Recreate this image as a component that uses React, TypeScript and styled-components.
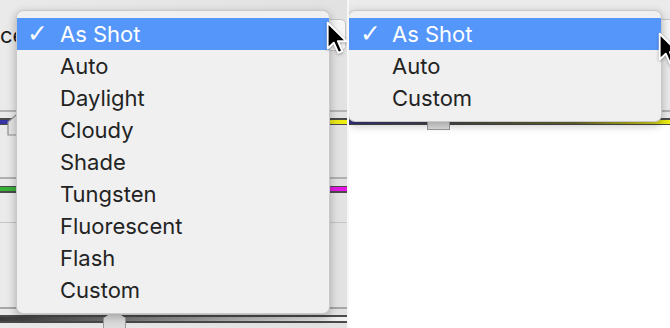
import React from "react";
import styled, { createGlobalStyle } from "styled-components";

const GlobalStyle = createGlobalStyle`
  html, body { margin: 0; padding: 0; overflow: hidden; background: #ffffff; }
  * { box-sizing: border-box; }
`;

const Screen = styled.div`
  display: grid;
  grid-template-columns: 347px 323px;
  width: 670px;
  height: 328px;
  font-family: Inter, "Liberation Sans", sans-serif;
`;

const Panel = styled.div<{ $bg: string }>`
  position: relative;
  overflow: hidden;
  background: ${(p) => p.$bg};
  display: flex;
  flex-direction: column;
`;

const RightPanel = styled(Panel)`
  border-left: 2px solid #f7f7f7;
`;

const LabelRow = styled.div`
  height: 110px;
  padding-top: 19px;
`;

const Label = styled.div`
  width: 16px;
  height: 32px;
  white-space: nowrap;
  font-size: 22px;
  line-height: 32px;
  color: #1c1c1c;
`;

const Gap = styled.div<{ $h: number }>`
  height: ${(p) => p.$h}px;
  flex: none;
`;

const Rule = styled.div<{ $h: number; $c: string }>`
  height: ${(p) => p.$h}px;
  background: ${(p) => p.$c};
  flex: none;
`;

const Track = styled.div<{ $fill: string; $top: number; $bottom: number; $h: number }>`
  position: relative;
  flex: none;
  height: ${(p) => p.$h}px;
  border-top: ${(p) => p.$top}px solid #4a4a4a;
  border-bottom: ${(p) => p.$bottom}px solid #4a4a4a;
  background: ${(p) => p.$fill};
`;

const WhiteArea = styled.div`
  flex: 1;
  background: #ffffff;
`;

const Thumb = styled.div<{ $left: number; $top: number }>`
  position: absolute;
  left: ${(p) => p.$left}px;
  top: ${(p) => p.$top}px;
  width: 23px;
  height: 18px;
  background: #dcdcdc;
  border: 1px solid #9a9a9a;
  clip-path: polygon(0 40%, 50% 0, 100% 40%, 100% 100%, 0 100%);
`;

const ThumbOutline = styled.svg<{ $left: number; $top: number }>`
  position: absolute;
  left: ${(p) => p.$left}px;
  top: ${(p) => p.$top}px;
`;

const ButtonStub = styled.div<{ $left: number; $top: number }>`
  position: absolute;
  left: ${(p) => p.$left}px;
  top: ${(p) => p.$top}px;
  width: 30px;
  height: 32px;
  background: #f6f6f6;
  border: 1px solid #c4c4c4;
  border-radius: 5px;
`;

const Menu = styled.div<{ $left: number }>`
  position: absolute;
  left: ${(p) => p.$left}px;
  top: 10px;
  width: 314px;
  padding: 7px 0;
  background: #f0f0f0;
  border: 1px solid rgba(0, 0, 0, 0.16);
  border-radius: 7px;
  box-shadow: 0 3px 10px rgba(0, 0, 0, 0.28);
  display: flex;
  flex-direction: column;
`;

const Item = styled.div<{ $active?: boolean }>`
  height: 32px;
  display: flex;
  align-items: center;
  background: ${(p) => (p.$active ? "#5596fb" : "transparent")};
  color: ${(p) => (p.$active ? "#ffffff" : "#232323")};
  font-size: 22px;
  line-height: 32px;
`;

const Check = styled.span<{ $pad: number }>`
  width: 43px;
  flex: none;
  padding-left: ${(p) => p.$pad}px;
  font-family: "DejaVu Sans", sans-serif;
  font-size: 25px;
  font-weight: bold;
`;

const Cursor = styled.svg<{ $left: number; $top: number }>`
  position: absolute;
  left: ${(p) => p.$left}px;
  top: ${(p) => p.$top}px;
  filter: drop-shadow(0 1px 1.5px rgba(0, 0, 0, 0.35));
`;

const Arrow = ({ left, top }: { left: number; top: number }) => (
  <Cursor $left={left} $top={top} width="22" height="34" viewBox="0 0 13 20">
    <path
      d="M1 1 V16.2 L4.6 12.8 L7.3 18.8 L9.6 17.8 L7 11.9 H11.9 Z"
      fill="#000"
      stroke="#fff"
      strokeWidth="1.1"
      strokeLinejoin="round"
    />
  </Cursor>
);

type MenuProps = { left: number; items: string[]; checkPad: number };

const PopupMenu = ({ left, items, checkPad }: MenuProps) => (
  <Menu $left={left}>
    {items.map((label, i) => (
      <Item key={label} $active={i === 0}>
        <Check $pad={checkPad}>{i === 0 ? "✓" : ""}</Check>
        <span>{label}</span>
      </Item>
    ))}
  </Menu>
);

const allItems = [
  "As Shot",
  "Auto",
  "Daylight",
  "Cloudy",
  "Shade",
  "Tungsten",
  "Fluorescent",
  "Flash",
  "Custom",
];

const tempFill = "linear-gradient(to right, #3434a6, #7a7a7a 50%, #efef12)";
const tintFill = "linear-gradient(to right, #33b233, #8a8a8a 50%, #e812e8)";
const toneFill = "linear-gradient(to right, #3a3a3a, #9a9a9a 55%, #f4f4f4)";

export default function App() {
  return (
    <>
      <GlobalStyle />
      <Screen>
        <Panel $bg="linear-gradient(to right, #eaeaea, #e2e2e2)">
          <LabelRow>
            <Label>ce</Label>
          </LabelRow>
          <Rule $h={2} $c="#b4b4b4" />
          <Gap $h={6} />
          <Track $fill={tempFill} $h={7} $top={2} $bottom={1} />
          <Gap $h={52} />
          <Rule $h={2} $c="#b0b0b0" />
          <Gap $h={7} />
          <Track $fill={tintFill} $h={7} $top={1} $bottom={2} />
          <Gap $h={29} />
          <Rule $h={1} $c="#c4c4c4" />
          <Gap $h={84} />
          <Rule $h={2} $c="#a6a6a6" />
          <Gap $h={6} />
          <Track $fill={toneFill} $h={8} $top={2} $bottom={2} />
          <ThumbOutline $left={7} $top={114} width="22" height="22" viewBox="0 0 22 22">
            <path d="M1 8 L9 1 H21 V21 H1 Z" fill="#e4e4e4" stroke="#8e8e8e" strokeWidth="1.2" />
          </ThumbOutline>
          <Thumb $left={103} $top={311} />
          <ButtonStub $left={316} $top={19} />
          <PopupMenu left={16} items={allItems} checkPad={10} />
          <Arrow left={326} top={21} />
        </Panel>
        <RightPanel $bg="#ebebeb">
          <Gap $h={110} />
          <Rule $h={2} $c="#b4b4b4" />
          <Gap $h={6} />
          <Track $fill="linear-gradient(to right, #34347e, #4a4a4a 30%, #6c6c30 70%, #efef12)" $h={7} $top={2} $bottom={1} />
          <WhiteArea />
          <Thumb $left={78} $top={112} />
          <ButtonStub $left={300} $top={19} />
          <PopupMenu left={-1} items={["As Shot", "Auto", "Custom"]} checkPad={11} />
          <Arrow left={309} top={32} />
        </RightPanel>
      </Screen>
    </>
  );
}
